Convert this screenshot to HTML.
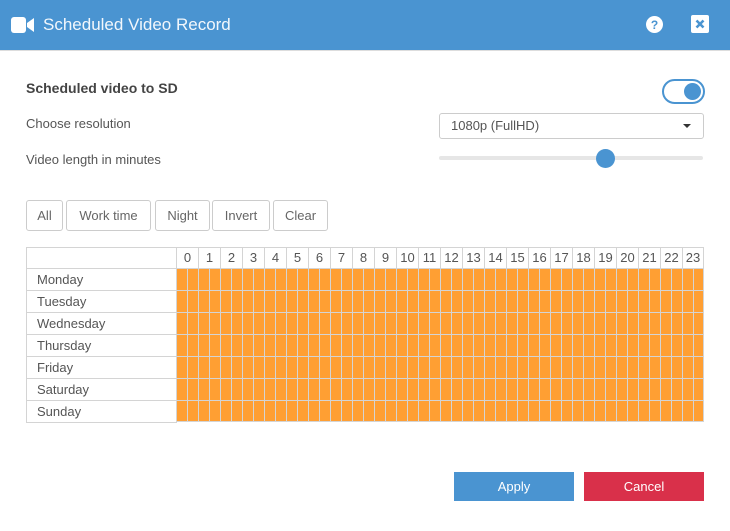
<!DOCTYPE html>
<html><head><style>
*{box-sizing:border-box;margin:0;padding:0}
body{width:730px;height:531px;background:#fff;font-family:"Liberation Sans",sans-serif;color:#555;position:relative;overflow:hidden}
.hdr{position:absolute;left:0;top:0;width:730px;height:51px;background:#4a94d1;border-bottom:1px solid #ddd}
.hdr .t{position:absolute;left:43px;top:15px;color:#f2f7fc;font-size:17px}
.a{position:absolute}
.lbl{font-size:13px;color:#555}
.btn{position:absolute;top:200px;height:31px;border:1px solid #ccc;border-radius:3px;font-size:13px;color:#666;text-align:center;line-height:29px}
.grid{position:absolute;left:176px;top:268px;width:528px;height:154px;background-color:#ff9f33;
background-image:repeating-linear-gradient(to right,#d4d4d4 0 1px,transparent 1px 11px),repeating-linear-gradient(to bottom,#d4d4d4 0 1px,transparent 1px 22px);border-right:1px solid #d4d4d4;border-bottom:1px solid #d4d4d4}
.days{position:absolute;left:26px;top:247px;width:151px;border:1px solid #d4d4d4;border-right:none}
.days div{height:22px;border-top:1px solid #d4d4d4;font-size:13px;line-height:22px;padding-left:10px;color:#555}
.days div:first-child{border-top:none;height:20px}
.hrs{position:absolute;left:176px;top:247px;height:21px;display:flex;border-top:1px solid #d4d4d4}
.hrs span{width:22px;border-left:1px solid #d4d4d4;text-align:center;font-size:13px;line-height:20px;color:#555}
.hrs span:last-child{border-right:1px solid #d4d4d4}
</style></head><body>
<div class="hdr">
<svg class="a" style="left:11px;top:17px" width="24" height="16" viewBox="0 0 24 16"><rect x="0" y="0" width="15" height="16" rx="3" fill="#fff"/><path d="M16 6 L23 1 L23 15 L16 10Z" fill="#fff"/></svg>
<div class="t">Scheduled Video Record</div>
<svg class="a" style="left:646px;top:16px" width="17" height="17" viewBox="0 0 17 17"><circle cx="8.5" cy="8.5" r="8.5" fill="#fff"/><text x="8.5" y="13" text-anchor="middle" font-size="12" font-weight="bold" fill="#4a94d1" font-family="Liberation Sans">?</text></svg>
<svg class="a" style="left:691px;top:15px" width="18" height="18" viewBox="0 0 18 18"><rect width="18" height="18" rx="2" fill="#fff"/><path d="M5.5 5.5L12.5 12.5M12.5 5.5L5.5 12.5" stroke="#4a94d1" stroke-width="2.6"/></svg>
</div>
<div class="a" style="left:26px;top:80px;font-size:14px;font-weight:bold;color:#444">Scheduled video to SD</div>
<div class="a" style="left:662px;top:79px;width:43px;height:25px;border:2px solid #4a94d1;border-radius:13px"><div class="a" style="left:20px;top:2px;width:17px;height:17px;border-radius:50%;background:#4a94d1"></div></div>
<div class="a lbl" style="left:26px;top:116px">Choose resolution</div>
<div class="a" style="left:439px;top:113px;width:265px;height:26px;border:1px solid #ccc;border-radius:3px;font-size:13px;line-height:24px;padding-left:11px;color:#555">1080p (FullHD)<span class="a" style="right:12px;top:10px;width:0;height:0;border-left:4px solid transparent;border-right:4px solid transparent;border-top:4px solid #333"></span></div>
<div class="a lbl" style="left:26px;top:152px">Video length in minutes</div>
<div class="a" style="left:439px;top:156px;width:264px;height:4px;border-radius:2px;background:#e6e6e6"></div>
<div class="a" style="left:596px;top:149px;width:19px;height:19px;border-radius:50%;background:#4a94d1"></div>
<div class="btn" style="left:26px;width:37px">All</div>
<div class="btn" style="left:66px;width:85px">Work time</div>
<div class="btn" style="left:155px;width:55px">Night</div>
<div class="btn" style="left:212px;width:58px">Invert</div>
<div class="btn" style="left:273px;width:55px">Clear</div>
<div class="days"><div></div><div>Monday</div><div>Tuesday</div><div>Wednesday</div><div>Thursday</div><div>Friday</div><div>Saturday</div><div>Sunday</div></div>
<div class="hrs"><span>0</span><span>1</span><span>2</span><span>3</span><span>4</span><span>5</span><span>6</span><span>7</span><span>8</span><span>9</span><span>10</span><span>11</span><span>12</span><span>13</span><span>14</span><span>15</span><span>16</span><span>17</span><span>18</span><span>19</span><span>20</span><span>21</span><span>22</span><span>23</span></div>
<div class="grid"></div>
<div class="a" style="left:454px;top:472px;width:120px;height:29px;background:#4a94d1;color:#fff;font-size:13px;text-align:center;line-height:29px">Apply</div>
<div class="a" style="left:584px;top:472px;width:120px;height:29px;background:#d9304a;color:#fff;font-size:13px;text-align:center;line-height:29px">Cancel</div>
</body></html>
